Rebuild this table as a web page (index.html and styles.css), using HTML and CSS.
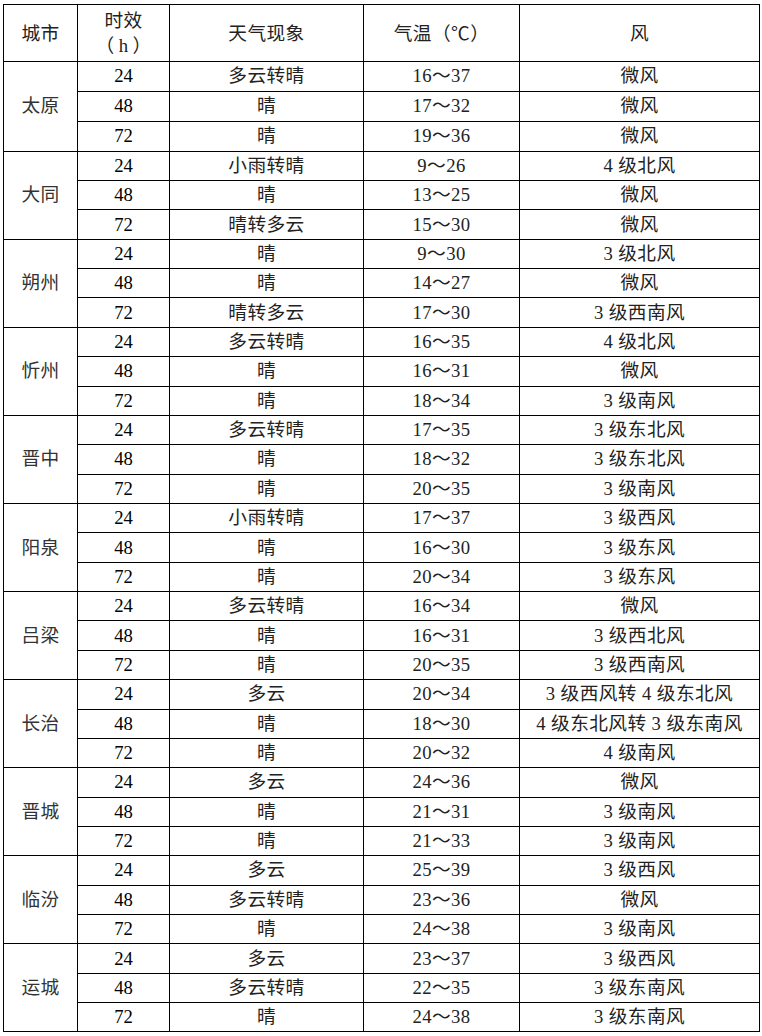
FILE: index.html
```html
<!DOCTYPE html>
<html lang="zh-CN">
<head>
<meta charset="utf-8">
<title>山西主要城市天气预报</title>
<link rel="stylesheet" href="styles.css">
</head>
<body>
<table class="wx">
  <colgroup>
    <col class="c-city"><col class="c-hour"><col class="c-sky"><col class="c-temp"><col class="c-wind">
  </colgroup>
  <thead>
    <tr class="head">
      <th>城市</th>
      <th class="two">时效<br>（<span class="unit">h</span>）</th>
      <th>天气现象</th>
      <th>气温（℃）</th>
      <th>风</th>
    </tr>
  </thead>
  <tbody class="first">
    <tr><td rowspan="3" class="city">太原</td><td class="hr">24</td><td>多云转晴</td><td class="t">16～37</td><td>微风</td></tr>
    <tr><td class="hr">48</td><td>晴</td><td class="t">17～32</td><td>微风</td></tr>
    <tr><td class="hr">72</td><td>晴</td><td class="t">19～36</td><td>微风</td></tr>
  </tbody>
  <tbody>
    <tr><td rowspan="3" class="city">大同</td><td class="hr">24</td><td>小雨转晴</td><td class="t">9～26</td><td>4 级北风</td></tr>
    <tr><td class="hr">48</td><td>晴</td><td class="t">13～25</td><td>微风</td></tr>
    <tr><td class="hr">72</td><td>晴转多云</td><td class="t">15～30</td><td>微风</td></tr>
  </tbody>
  <tbody>
    <tr><td rowspan="3" class="city">朔州</td><td class="hr">24</td><td>晴</td><td class="t">9～30</td><td>3 级北风</td></tr>
    <tr><td class="hr">48</td><td>晴</td><td class="t">14～27</td><td>微风</td></tr>
    <tr><td class="hr">72</td><td>晴转多云</td><td class="t">17～30</td><td>3 级西南风</td></tr>
  </tbody>
  <tbody>
    <tr><td rowspan="3" class="city">忻州</td><td class="hr">24</td><td>多云转晴</td><td class="t">16～35</td><td>4 级北风</td></tr>
    <tr><td class="hr">48</td><td>晴</td><td class="t">16～31</td><td>微风</td></tr>
    <tr><td class="hr">72</td><td>晴</td><td class="t">18～34</td><td>3 级南风</td></tr>
  </tbody>
  <tbody>
    <tr><td rowspan="3" class="city">晋中</td><td class="hr">24</td><td>多云转晴</td><td class="t">17～35</td><td>3 级东北风</td></tr>
    <tr><td class="hr">48</td><td>晴</td><td class="t">18～32</td><td>3 级东北风</td></tr>
    <tr><td class="hr">72</td><td>晴</td><td class="t">20～35</td><td>3 级南风</td></tr>
  </tbody>
  <tbody>
    <tr><td rowspan="3" class="city">阳泉</td><td class="hr">24</td><td>小雨转晴</td><td class="t">17～37</td><td>3 级西风</td></tr>
    <tr><td class="hr">48</td><td>晴</td><td class="t">16～30</td><td>3 级东风</td></tr>
    <tr><td class="hr">72</td><td>晴</td><td class="t">20～34</td><td>3 级东风</td></tr>
  </tbody>
  <tbody>
    <tr><td rowspan="3" class="city">吕梁</td><td class="hr">24</td><td>多云转晴</td><td class="t">16～34</td><td>微风</td></tr>
    <tr><td class="hr">48</td><td>晴</td><td class="t">16～31</td><td>3 级西北风</td></tr>
    <tr><td class="hr">72</td><td>晴</td><td class="t">20～35</td><td>3 级西南风</td></tr>
  </tbody>
  <tbody>
    <tr><td rowspan="3" class="city">长治</td><td class="hr">24</td><td>多云</td><td class="t">20～34</td><td>3 级西风转 4 级东北风</td></tr>
    <tr><td class="hr">48</td><td>晴</td><td class="t">18～30</td><td>4 级东北风转 3 级东南风</td></tr>
    <tr><td class="hr">72</td><td>晴</td><td class="t">20～32</td><td>4 级南风</td></tr>
  </tbody>
  <tbody>
    <tr><td rowspan="3" class="city">晋城</td><td class="hr">24</td><td>多云</td><td class="t">24～36</td><td>微风</td></tr>
    <tr><td class="hr">48</td><td>晴</td><td class="t">21～31</td><td>3 级南风</td></tr>
    <tr><td class="hr">72</td><td>晴</td><td class="t">21～33</td><td>3 级南风</td></tr>
  </tbody>
  <tbody>
    <tr><td rowspan="3" class="city">临汾</td><td class="hr">24</td><td>多云</td><td class="t">25～39</td><td>3 级西风</td></tr>
    <tr><td class="hr">48</td><td>多云转晴</td><td class="t">23～36</td><td>微风</td></tr>
    <tr><td class="hr">72</td><td>晴</td><td class="t">24～38</td><td>3 级南风</td></tr>
  </tbody>
  <tbody>
    <tr><td rowspan="3" class="city">运城</td><td class="hr">24</td><td>多云</td><td class="t">23～37</td><td>3 级西风</td></tr>
    <tr><td class="hr">48</td><td>多云转晴</td><td class="t">22～35</td><td>3 级东南风</td></tr>
    <tr><td class="hr">72</td><td>晴</td><td class="t">24～38</td><td>3 级东南风</td></tr>
  </tbody>
</table>
</body>
</html>
```

FILE: styles.css
```css
html, body {
  margin: 0;
  padding: 0;
  background: #ffffff;
}

body {
  padding: 4px 0 0 3px;
}

.wx {
  border-collapse: collapse;
  table-layout: fixed;
  width: 756px;
  font-family: "Liberation Serif", "Noto Sans CJK SC", serif;
  font-size: 18.7px;
  letter-spacing: 0.4px;
  color: #222;
}

.c-city { width: 74px; }
.c-hour { width: 92px; }
.c-sky  { width: 194px; }
.c-temp { width: 156px; }
.c-wind { width: 240px; }

.wx th,
.wx td {
  border: 1px solid #000;
  padding: 0;
  text-align: center;
  vertical-align: middle;
  font-weight: 400;
  line-height: 22px;
  white-space: nowrap;
}

.head { height: 57px; }
.head th { line-height: 25px; }
.unit { padding: 0 4px; }

.wx tbody tr { height: 29.37px; }
.wx tbody.first tr { height: 29.9px; }

.hr { color: #000; letter-spacing: 0; }
.city { color: #333; }
```
